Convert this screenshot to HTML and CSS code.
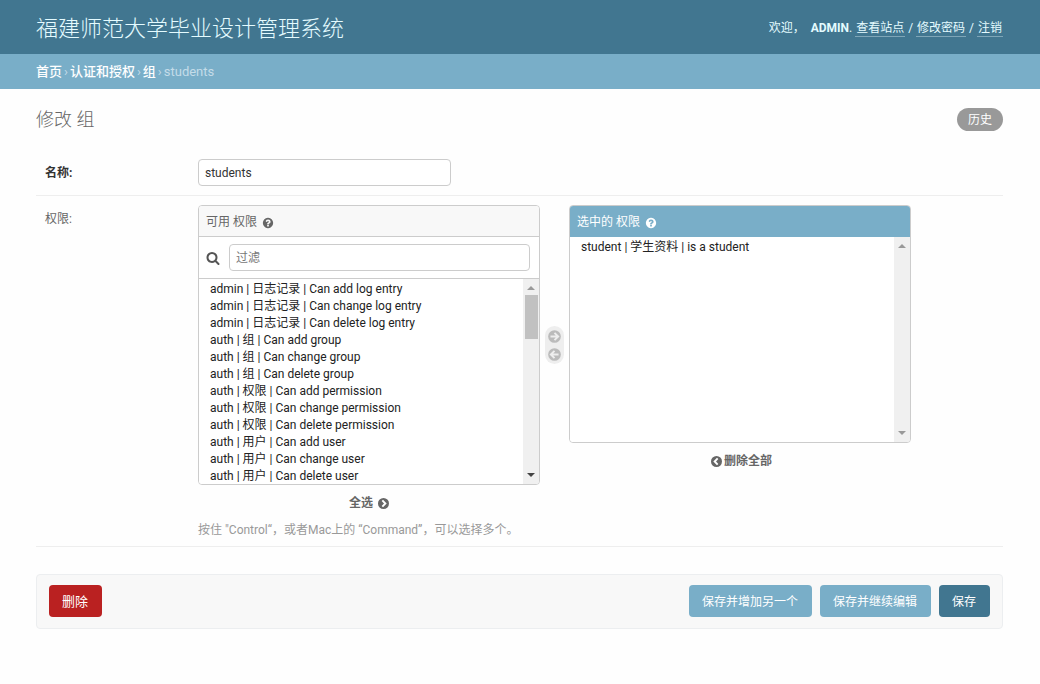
FILE: index.html
```html
<!DOCTYPE html>
<html lang="zh-CN">
<head>
<meta charset="utf-8">
<meta name="viewport" content="width=device-width, initial-scale=1">
<title>修改 组</title>
<link rel="stylesheet" href="styles.css">
</head>
<body>
<svg class="sprite" aria-hidden="true">
  <symbol id="help" viewBox="0 0 1792 1792"><path d="M1024 1376v-192q0-14-9-23t-23-9h-192q-14 0-23 9t-9 23v192q0 14 9 23t23 9h192q14 0 23-9t9-23zm256-672q0-88-55.500-163t-138.500-116-170-41q-243 0-371 213-15 24 8 42l132 100q7 6 19 6 16 0 25-12 53-68 86-92 34-24 86-24 48 0 85.500 26t37.500 59q0 38-20 61t-68 45q-63 28-115.500 86.500t-52.500 125.500v36q0 14 9 23t23 9h192q14 0 23-9t9-23q0-19 21.500-49.500t54.500-49.500q32-18 49-28.500t46-35 44.500-48 28-60.500 12.500-81zm384 192q0 209-103 385.500t-279.500 279.500-385.500 103-385.500-103-279.500-279.500-103-385.500 103-385.500 279.500-279.500 385.500-103 385.500 103 279.500 279.500 103 385.500z"/></symbol>
  <symbol id="search" viewBox="0 0 1792 1792"><path d="M1216 832q0-185-131.500-316.500t-316.500-131.500-316.500 131.500-131.500 316.500 131.500 316.500 316.500 131.500 316.500-131.500 131.500-316.500zm512 832q0 52-38 90t-90 38q-54 0-90-38l-343-342q-179 124-399 124-143 0-273.500-55.500t-225-150-150-225-55.500-273.500 55.500-273.500 150-225 225-150 273.500-55.500 273.500 55.500 225 150 150 225 55.500 273.500q0 220-124 399l343 343q37 37 37 90z"/></symbol>
  <symbol id="chevron" viewBox="0 0 16 16"><circle cx="8" cy="8" r="8"/><path d="M6.300 3.500 10.700 8l-4.400 4.500" fill="none" stroke="#fff" stroke-width="2.800"/></symbol>
  <symbol id="arrow" viewBox="0 0 16 16"><circle cx="8" cy="8" r="7.800"/><path d="M3 8h9M8 3.500 12.500 8 8 12.500" fill="none" stroke="#eee" stroke-width="2.400"/></symbol>
  <symbol id="tri" viewBox="0 0 8 4"><path d="M0 4 4 0l4 4z"/></symbol>
</svg>
<header class="header">
  <div class="site-name">福建师范大学毕业设计管理系统</div>
  <div class="user-tools">欢迎， <strong>ADMIN</strong>. <a href="#">查看站点</a> / <a href="#">修改密码</a> / <a href="#">注销</a></div>
</header>
<nav class="breadcrumbs"><a href="#">首页</a><span>›</span><a href="#">认证和授权</a><span>›</span><a href="#">组</a><span>›</span><span>students</span></nav>
<main class="content">
  <div class="title-row">
    <h1>修改 组</h1>
    <a class="history" href="#">历史</a>
  </div>
  <form>
    <div class="form-row">
      <label class="required" for="name">名称:</label>
      <input class="text-field" id="name" type="text" value="students">
    </div>
    <div class="form-row">
      <label for="available">权限:</label>
      <div class="field">
        <div class="selector">
          <div class="column">
            <div class="box">
              <h2 class="box-title">可用 权限 <svg class="icon"><use href="#help"/></svg></h2>
              <div class="filter">
                <label for="filter" aria-label="过滤"><svg class="search-icon"><use href="#search"/></svg></label>
                <input class="text-field" id="filter" type="text" placeholder="过滤">
              </div>
              <div class="list">
                <select id="available" multiple size="12">
                  <option>admin | 日志记录 | Can add log entry</option>
                  <option>admin | 日志记录 | Can change log entry</option>
                  <option>admin | 日志记录 | Can delete log entry</option>
                  <option>auth | 组 | Can add group</option>
                  <option>auth | 组 | Can change group</option>
                  <option>auth | 组 | Can delete group</option>
                  <option>auth | 权限 | Can add permission</option>
                  <option>auth | 权限 | Can change permission</option>
                  <option>auth | 权限 | Can delete permission</option>
                  <option>auth | 用户 | Can add user</option>
                  <option>auth | 用户 | Can change user</option>
                  <option>auth | 用户 | Can delete user</option>
                </select>
                <div class="track">
                  <svg class="tri"><use href="#tri"/></svg>
                  <div class="thumb"></div>
                  <svg class="tri down active"><use href="#tri"/></svg>
                </div>
              </div>
            </div>
            <a class="bulk" href="#">全选 <svg class="icon"><use href="#chevron"/></svg></a>
          </div>
          <div class="chooser">
            <button type="button" aria-label="选择"><svg><use href="#arrow"/></svg></button>
            <button type="button" aria-label="删除"><svg class="flip"><use href="#arrow"/></svg></button>
          </div>
          <div class="column">
            <div class="box">
              <h2 class="box-title chosen">选中的 权限 <svg class="icon"><use href="#help"/></svg></h2>
              <div class="list">
                <select multiple size="12" aria-label="选中的 权限">
                  <option>student | 学生资料 | is a student</option>
                </select>
                <div class="track">
                  <svg class="tri"><use href="#tri"/></svg>
                  <svg class="tri down"><use href="#tri"/></svg>
                </div>
              </div>
            </div>
            <a class="bulk remove" href="#"><svg class="icon flip"><use href="#chevron"/></svg>删除全部</a>
          </div>
        </div>
        <p class="help">按住 "Control“，或者Mac上的 “Command”，可以选择多个。</p>
      </div>
    </div>
    <div class="submit-row">
      <button class="button delete" type="button">删除</button>
      <button class="button" type="submit">保存并增加另一个</button>
      <button class="button" type="submit">保存并继续编辑</button>
      <button class="button save" type="submit">保存</button>
    </div>
  </form>
</main>
</body>
</html>
```

FILE: styles.css
```css
* { box-sizing: border-box; }
body {
  margin: 0;
  background: #fefefe;
  color: #333;
  font: 12px/17px Roboto, "Noto Sans CJK SC", sans-serif;
}
.sprite { display: none; }
.header {
  display: flex;
  align-items: center;
  justify-content: space-between;
  min-height: 54px;
  padding: 3px 37px 0 36px;
  background: #417690;
  color: #e4fbff;
}
.site-name { font-size: 22px; line-height: 30px; font-weight: 300; }
.user-tools strong { margin-left: 3px; }
.user-tools a {
  display: inline-block;
  padding: 0 1px;
  color: inherit;
  line-height: 15px;
  text-decoration: none;
  border-bottom: 1px solid #7fa6b8;
}
.breadcrumbs {
  display: flex;
  gap: 2px;
  padding: 9px 36px;
  background: #79aec8;
  color: #c4dce8;
  font-size: 13px;
}
.breadcrumbs a { color: #fff; text-decoration: none; font-weight: 500; }
.content { padding: 19px 37px 0 36px; }
.title-row {
  display: flex;
  align-items: center;
  justify-content: space-between;
  margin-bottom: 19px;
}
h1 {
  margin: 0;
  color: #666;
  font-size: 18px;
  line-height: 23px;
  font-weight: 300;
}
.history {
  padding: 4px 11px 2px;
  border-radius: 12px;
  background: #999;
  color: #fff;
  text-decoration: none;
}
.form-row {
  display: grid;
  grid-template-columns: 153px minmax(0, 1fr);
  align-items: start;
  padding: 9px 0 9px 9px;
  border-bottom: 1px solid #eee;
}
.form-row > label { padding-top: 6px; color: #666; }
.form-row > .required { color: #333; font-weight: 700; }
.text-field {
  width: 253px;
  height: 27px;
  padding: 5px 6px;
  border: 1px solid #ccc;
  border-radius: 4px;
  background: #fff;
  color: #333;
  font: inherit;
}
.text-field::placeholder { color: #777; }
.selector {
  display: grid;
  grid-template-columns: 342px 19px 342px;
  gap: 5px;
  align-items: start;
}
.box {
  border: 1px solid #ccc;
  border-radius: 4px;
  overflow: hidden;
  background: #fff;
}
.box-title {
  display: flex;
  align-items: center;
  gap: 5px;
  margin: 0;
  padding: 8px 7px 5px;
  border-bottom: 1px solid #ccc;
  background: #f8f8f8;
  color: #666;
  font-size: 12px;
  line-height: 17px;
  font-weight: 400;
}
.box-title.chosen { border-color: #79aec8; background: #79aec8; color: #fff; }
.icon { width: 11px; height: 11px; fill: currentColor; }
.box-title .icon { width: 12px; height: 12px; }
.filter {
  display: flex;
  align-items: center;
  gap: 9px;
  padding: 7px 9px 7px 7px;
  border-bottom: 1px solid #ccc;
}
.filter label { display: flex; }
.filter .text-field { flex: 1; }
.search-icon { width: 14px; height: 14px; fill: #555; }
.list { display: flex; }
.list select {
  flex: 1;
  height: 205px;
  padding: 0 9px;
  border: 0;
  outline: 0;
  background: #fff;
  color: #222;
  font: inherit;
  scrollbar-width: none;
}
.list option { height: 17px; min-height: 17px; padding: 0 2px 2px; line-height: 15px; }
.track {
  display: flex;
  flex-direction: column;
  align-items: center;
  width: 16px;
  padding: 7px 0;
  background: #f0f0f0;
}
.tri { width: 8px; height: 4px; fill: #999; }
.tri.down { margin-top: auto; transform: rotate(180deg); }
.tri.active { fill: #444; }
.thumb { width: 13px; height: 44px; margin-top: 5px; background: #c1c1c1; }
.bulk {
  display: flex;
  align-items: center;
  justify-content: center;
  gap: 5px;
  margin-top: 10px;
  color: #666;
  font-weight: 700;
  text-decoration: none;
}
.bulk.remove { gap: 2px; padding-left: 3px; }
.flip { transform: scaleX(-1); }
.chooser {
  display: flex;
  flex-direction: column;
  gap: 5px;
  margin-top: 121px;
  padding: 4px 3px 3px;
  border-radius: 10px;
  background: #eee;
}
.chooser button { display: flex; padding: 0; border: 0; background: none; }
.chooser svg { width: 13px; height: 13px; fill: #bbb; }
.help { margin: 12px 0 0; color: #999; line-height: 13px; }
.submit-row {
  display: flex;
  gap: 8px;
  margin-top: 27px;
  padding: 10px 12px 11px;
  border: 1px solid #eceef0;
  border-radius: 4px;
  background: #f8f8f8;
}
.button {
  height: 32px;
  padding: 2px 14px 0 13px;
  border: 0;
  border-radius: 4px;
  background: #79aec8;
  color: #fff;
  font: inherit;
}
.delete { margin-right: auto; padding-top: 0; background: #ba2121; font-size: 13px; }
.save { background: #417690; }
```
